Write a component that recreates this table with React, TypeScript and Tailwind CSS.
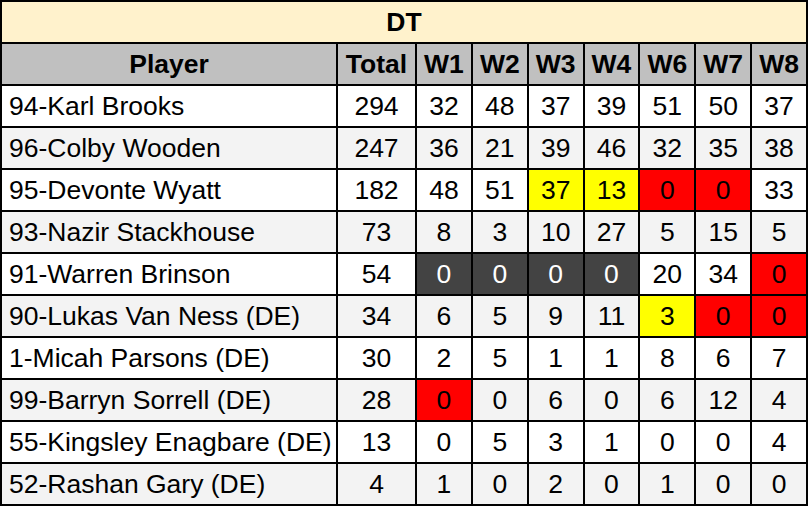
import React from "react";

type Cell = string | { v: string; c: "y" | "r" | "d" };

const rows: [string, Cell[]][] = [
  ["94-Karl Brooks", ["294", "32", "48", "37", "39", "51", "50", "37"]],
  ["96-Colby Wooden", ["247", "36", "21", "39", "46", "32", "35", "38"]],
  ["95-Devonte Wyatt", ["182", "48", "51", { v: "37", c: "y" }, { v: "13", c: "y" }, { v: "0", c: "r" }, { v: "0", c: "r" }, "33"]],
  ["93-Nazir Stackhouse", ["73", "8", "3", "10", "27", "5", "15", "5"]],
  ["91-Warren Brinson", ["54", { v: "0", c: "d" }, { v: "0", c: "d" }, { v: "0", c: "d" }, { v: "0", c: "d" }, "20", "34", { v: "0", c: "r" }]],
  ["90-Lukas Van Ness (DE)", ["34", "6", "5", "9", "11", { v: "3", c: "y" }, { v: "0", c: "r" }, { v: "0", c: "r" }]],
  ["1-Micah Parsons (DE)", ["30", "2", "5", "1", "1", "8", "6", "7"]],
  ["99-Barryn Sorrell (DE)", ["28", { v: "0", c: "r" }, "0", "6", "0", "6", "12", "4"]],
  ["55-Kingsley Enagbare (DE)", ["13", "0", "5", "3", "1", "0", "0", "4"]],
  ["52-Rashan Gary (DE)", ["4", "1", "0", "2", "0", "1", "0", "0"]],
];

const headers = ["Total", "W1", "W2", "W3", "W4", "W6", "W7", "W8"];

export default function App() {
  return (
    <div
      className="w-[808px] h-[506px] bg-black p-[2px] grid grid-cols-[334px_77px_repeat(7,1fr)] grid-rows-[repeat(12,40px)] gap-[2px] text-[26.5px] text-black leading-none"
      style={{ fontFamily: '"Liberation Sans", Arial, sans-serif' }}
    >
      <div className="col-span-9 bg-[#fff2cc] flex items-center justify-center font-bold pt-[1px]">DT</div>
      <div className="bg-[#c0c0c0] flex items-center justify-center font-bold pt-[1px]">Player</div>
      {headers.map((h) => (
        <div key={h} className="bg-[#c0c0c0] flex items-center justify-center font-bold pt-[1px]">
          {h}
        </div>
      ))}
      {rows.map(([name, cells], i) => {
        const base = i % 2 === 0 ? "bg-white" : "bg-[#f3f3f3]";
        return (
          <React.Fragment key={name}>
            <div className={`${base} flex items-center pl-[7px] pt-[1px] whitespace-nowrap`}>{name}</div>
            {cells.map((cell, j) => {
              if (typeof cell === "string") {
                return (
                  <div key={j} className={`${base} flex items-center justify-center pt-[1px]`}>
                    {cell}
                  </div>
                );
              }
              const cls =
                cell.c === "y"
                  ? "bg-[#ffff00] text-black"
                  : cell.c === "r"
                  ? "bg-[#ff0000] text-black"
                  : "bg-[#434343] text-white";
              return (
                <div key={j} className={`${cls} flex items-center justify-center pt-[1px]`}>
                  {cell.v}
                </div>
              );
            })}
          </React.Fragment>
        );
      })}
    </div>
  );
}
